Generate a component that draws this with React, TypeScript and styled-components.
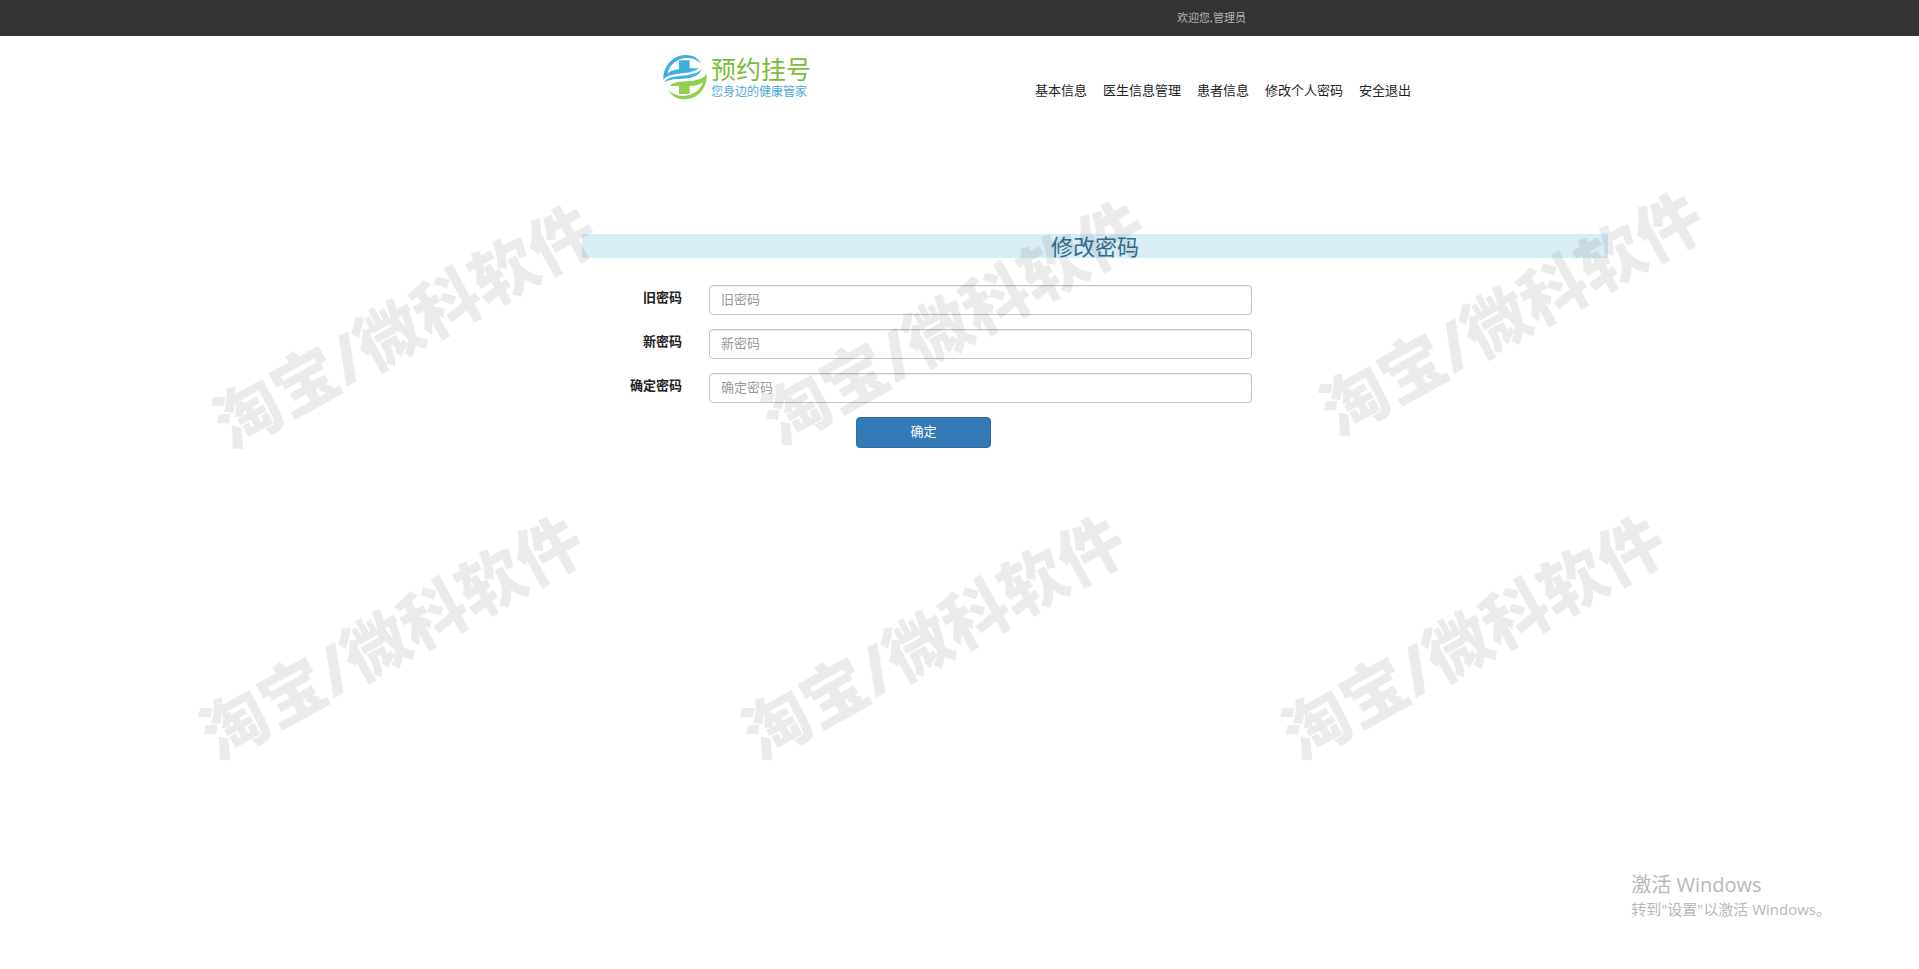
import React from 'react';
import styled, { createGlobalStyle } from 'styled-components';

const GlobalStyle = createGlobalStyle`
  *, *::before, *::after { box-sizing: border-box; }
  html { height: 100%; }
  body {
    margin: 0;
    min-height: 100%;
    background: #fff;
    color: #333;
    font: 13px/20px "Noto Sans", "Noto Sans CJK SC", sans-serif;
  }
  #root { display: flow-root; }
`;

const Page = styled.div`
  position: relative;
  min-height: 100vh;
  overflow: hidden;
`;

const TopBar = styled.div`
  display: grid;
  grid-template-columns: minmax(0, 1177fr) minmax(0, 742fr);
  align-items: center;
  height: 36px;
  background: #333;
`;

const Welcome = styled.span`
  grid-column: 2;
  font-size: 11px;
  line-height: 16px;
  color: #b5b5b5;
`;

const Header = styled.header`
  display: grid;
  grid-template-columns: minmax(0, 663fr) minmax(0, 372fr) minmax(0, 884fr);
  padding: 18px 0;
`;

const Logo = styled.a`
  grid-column: 2;
  display: flex;
  align-items: center;
  gap: 4px;
  text-decoration: none;
`;

const LogoText = styled.span`
  display: flex;
  flex-direction: column;
`;

const LogoName = styled.span`
  font-size: 25px;
  line-height: 30px;
  color: #79bd3c;
`;

const LogoSlogan = styled.span`
  font-size: 12px;
  line-height: 16px;
  color: #4fa9d6;
`;

const Nav = styled.nav`
  display: flex;
  align-items: flex-end;
  gap: 16px;
`;

const NavLink = styled.a`
  color: #222;
  text-decoration: none;
  white-space: nowrap;
`;

const Main = styled.main`
  display: grid;
  grid-template-columns: minmax(0, 582fr) minmax(0, 1026fr) minmax(0, 311fr);
  padding-top: 116px;
`;

const Panel = styled.section`
  grid-column: 2;
`;

const Title = styled.h1`
  margin: 0;
  background: #d9edf7;
  color: #31708f;
  font-size: 22px;
  font-weight: 400;
  line-height: 24px;
  text-align: center;
`;

const Form = styled.form`
  display: flex;
  flex-direction: column;
  gap: 14px;
  padding-top: 27px;
`;

const Row = styled.div`
  display: grid;
  grid-template-columns: minmax(0, 100fr) minmax(0, 27fr) minmax(0, 543fr) minmax(0, 356fr);
`;

const Label = styled.label`
  padding-top: 2px;
  color: #222;
  font-weight: 700;
  text-align: right;
`;

const Input = styled.input`
  grid-column: 3;
  width: 100%;
  height: 30px;
  padding: 0 11px 3px;
  border: 1px solid #c4c4c4;
  border-radius: 4px;
  background: #fff;
  box-shadow: inset 0 1px 1px rgba(0, 0, 0, 0.075);
  color: #555;
  font: inherit;

  &::placeholder { color: #999; opacity: 1; }
`;

const Actions = styled.div`
  display: grid;
  grid-template-columns: minmax(0, 274fr) minmax(0, 135fr) minmax(0, 617fr);
`;

const SubmitButton = styled.button`
  grid-column: 2;
  height: 31px;
  padding: 0 12px 4px;
  border: 1px solid #2e6da4;
  border-radius: 4px;
  background: #337ab7;
  color: #fff;
  font: inherit;
  cursor: pointer;
`;

const Overlay = styled.div`
  position: absolute;
  inset: 0;
  overflow: hidden;
  pointer-events: none;
`;

const Watermark = styled.span<{ $x: number; $y: number }>`
  position: absolute;
  left: calc(50% + ${(p) => p.$x}px);
  top: ${(p) => p.$y}px;
  transform: translate(-50%, -50%) rotate(-29deg);
  color: rgba(0, 0, 0, 0.08);
  font-size: 66px;
  font-weight: 900;
  line-height: 66px;
  white-space: nowrap;
`;

const Activation = styled.aside`
  position: absolute;
  right: 88px;
  bottom: 49px;
  color: #b8b8b8;
  font-family: "Open Sans", "Noto Sans CJK SC", sans-serif;
  font-size: 15px;
  line-height: 22px;
  pointer-events: none;
`;

const ActivationTitle = styled.div`
  font-size: 20px;
  line-height: 26px;
`;

const navItems = ['基本信息', '医生信息管理', '患者信息', '修改个人密码', '安全退出'];

const fields = [
  { id: 'old-password', label: '旧密码' },
  { id: 'new-password', label: '新密码' },
  { id: 'confirm-password', label: '确定密码' },
];

const marks = [
  { x: -556, y: 325 },
  { x: -7, y: 321 },
  { x: 551, y: 312 },
  { x: -569, y: 636 },
  { x: -27, y: 636 },
  { x: 513, y: 636 },
];

function LogoMark() {
  return (
    <svg width="44" height="46" viewBox="14 12 132 136" aria-hidden="true">
      {/* outer blue arc and the left end of the wave */}
      <path fill="#3db0e2" d="M15 88C14 45 46 14 82 14C104 14 120 24 128 40C114 25 96 20 76 24C50 29 30 50 28 70C36 62 48 58 62 57L62 32Q62 30 64 30L92 30Q94 30 94 32L94 54L122 54C106 66 84 68 62 70C40 72 24 76 15 88Z" />
      {/* blue wave through the middle */}
      <path fill="#3db0e2" d="M16 96C26 82 44 79 66 77C96 74 118 70 130 56C122 78 100 84 72 85C48 86 28 88 16 96Z" />
      {/* green lower half with the foot of the cross */}
      <path fill="#8fd14f" d="M145 70C149 112 118 147 80 147C56 147 38 136 29 118C42 132 62 138 82 136C108 133 128 116 134 96C124 104 110 107 94 107L94 129Q94 131 92 131L64 131Q62 131 62 129L62 107L34 107C42 97 60 94 82 93C114 91 136 86 145 70Z" />
    </svg>
  );
}

export default function App() {
  return (
    <>
      <GlobalStyle />
      <Page>
        <TopBar>
          <Welcome>欢迎您,管理员</Welcome>
        </TopBar>
        <Header>
          <Logo href="#">
            <LogoMark />
            <LogoText>
              <LogoName>预约挂号</LogoName>
              <LogoSlogan>您身边的健康管家</LogoSlogan>
            </LogoText>
          </Logo>
          <Nav>
            {navItems.map((item) => (
              <NavLink key={item} href="#">{item}</NavLink>
            ))}
          </Nav>
        </Header>
        <Main>
          <Panel>
            <Title>修改密码</Title>
            <Form onSubmit={(e) => e.preventDefault()}>
              {fields.map((f) => (
                <Row key={f.id}>
                  <Label htmlFor={f.id}>{f.label}</Label>
                  <Input id={f.id} type="password" placeholder={f.label} />
                </Row>
              ))}
              <Actions>
                <SubmitButton type="submit">确定</SubmitButton>
              </Actions>
            </Form>
          </Panel>
        </Main>
        <Overlay>
          {marks.map((m) => (
            <Watermark key={`${m.x},${m.y}`} $x={m.x} $y={m.y}>淘宝/微科软件</Watermark>
          ))}
        </Overlay>
        <Activation>
          <ActivationTitle>激活 Windows</ActivationTitle>
          转到"设置"以激活 Windows。
        </Activation>
      </Page>
    </>
  );
}
